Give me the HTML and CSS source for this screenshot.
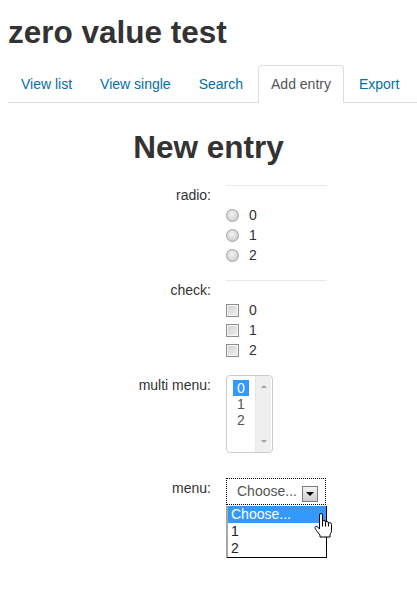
FILE: index.html
```html
<!DOCTYPE html>
<html lang="en">
<head>
  <meta charset="UTF-8" />
  <title>zero value test</title>
  <link rel="stylesheet" href="styles.css">
</head>
<body>
  <h2 class="page-title">zero value test</h2>

  <ul class="tabs">
    <li><a href="#">View list</a></li>
    <li><a href="#">View single</a></li>
    <li><a href="#">Search</a></li>
    <li class="active"><a href="#">Add entry</a></li>
    <li><a href="#">Export</a></li>
  </ul>

  <h2 class="form-title">New entry</h2>

  <form class="entry-form">
    <div class="row">
      <div class="label">radio:</div>
      <div class="field">
        <div class="sep"></div>
        <label class="opt"><input type="radio" name="radio"> 0</label>
        <label class="opt"><input type="radio" name="radio"> 1</label>
        <label class="opt"><input type="radio" name="radio"> 2</label>
      </div>
    </div>

    <div class="row">
      <div class="label">check:</div>
      <div class="field">
        <div class="sep"></div>
        <label class="opt"><input type="checkbox"> 0</label>
        <label class="opt"><input type="checkbox"> 1</label>
        <label class="opt"><input type="checkbox"> 2</label>
      </div>
    </div>

    <div class="row row-multi">
      <div class="label">multi menu:</div>
      <div class="field">
        <div class="listbox">
          <div class="listbox-opts">
            <span class="lb-opt selected">0</span>
            <span class="lb-opt">1</span>
            <span class="lb-opt">2</span>
          </div>
          <div class="scrollbar">
            <span class="sb-up"></span>
            <span class="sb-down"></span>
          </div>
        </div>
      </div>
    </div>

    <div class="row row-menu">
      <div class="label">menu:</div>
      <div class="field">
        <div class="menu-wrap">
          <div class="select">
            <span class="select-text">Choose...</span>
            <span class="select-btn"></span>
          </div>
          <ul class="popup">
            <li class="highlight">Choose...</li>
            <li>1</li>
            <li>2</li>
          </ul>
          <!-- mouse pointer over the open list -->
          <svg class="cursor" width="18" height="25" viewBox="0 0 18 25">
            <path d="M5 1.5 Q5 0 6.5 0 Q8 0 8 1.5 V8 Q8 7 9.5 7 Q11 7 11 8.5 V9 Q11 8 12.5 8 Q14 8 14 9.5 V10 Q14 9.2 15.3 9.2 Q17 9.2 17 11 V17 Q17 19 15.5 21 V23.5 H5.5 V21.5 Q4 20 2 17 L0.6 14.8 Q0 13.6 1.2 13 Q2.4 12.5 3.4 13.7 L5 15.5 Z" fill="#fff" stroke="#000" stroke-width="1" transform="translate(0.5 0.5)"/>
            <path d="M8.5 8.5 V13.5 M11.5 9.5 V13.5 M14.5 10.5 V13.5" stroke="#000" stroke-width="1" fill="none"/>
          </svg>
        </div>
      </div>
    </div>
  </form>
</body>
</html>
```

FILE: styles.css
```css
* {
  box-sizing: border-box;
}

body {
  margin: 0;
  padding: 12px 8px 0;
  min-height: 592px;
  font-family: "Liberation Sans", Arial, sans-serif;
  font-size: 14px;
  line-height: 20px;
  color: #333;
  background: #fff;
}

h2 {
  margin: 0;
  font-size: 31.5px;
  line-height: 40px;
  font-weight: bold;
  color: #333;
}

.tabs {
  list-style: none;
  margin: 13px -8px 0 0;
  padding: 0;
  display: flex;
  border-bottom: 1px solid #ddd;
}

.tabs li {
  flex-shrink: 0;
  margin-bottom: -1px;
}

.tabs a {
  display: block;
  padding: 8px 12px;
  margin-right: 2px;
  line-height: 20px;
  white-space: nowrap;
  border: 1px solid transparent;
  border-radius: 4px 4px 0 0;
  color: #0070a8;
  text-decoration: none;
}

.tabs .active a {
  color: #555;
  background: #fff;
  border-color: #ddd #ddd transparent;
}

.form-title {
  margin-top: 24px;
  text-align: center;
}

.entry-form {
  margin-top: 18px;
  padding-bottom: 70px;
}

.row {
  display: grid;
  grid-template-columns: 203px 1fr;
  column-gap: 15px;
  margin-bottom: 15px;
}

.row-multi {
  margin-bottom: 25px;
}

.label {
  text-align: right;
}

.sep {
  width: 101px;
  border-top: 1px solid #e8e8e8;
  margin-bottom: 19px;
}

.opt {
  display: flex;
  align-items: center;
  height: 20px;
  gap: 10px;
}

.opt input {
  -webkit-appearance: none;
  appearance: none;
  margin: 0;
  width: 13px;
  height: 13px;
}

.opt input[type="radio"] {
  border-radius: 50%;
  border: 1px solid #a2a2a2;
  background: radial-gradient(circle at 45% 40%, #f4f4f4 0, #dcdcdc 45%, #c4c4c4 100%);
}

.opt input[type="checkbox"] {
  border: 1px solid #8f8f8f;
  box-shadow: inset 0 0 0 1px #f4f4f4;
  background: linear-gradient(135deg, #cfcfcf, #f2f2f2);
}

/* multi select box */
.listbox {
  display: flex;
  width: 47px;
  height: 78px;
  padding: 0 1px 0 0;
  border: 1px solid #ccc;
  border-radius: 4px;
  color: #555;
}

.listbox-opts {
  width: 28px;
  padding-top: 4px;
}

.lb-opt {
  display: block;
  width: fit-content;
  margin-left: 6px;
  padding: 0 4px;
  line-height: 16px;
}

.lb-opt.selected {
  background: #3399ff;
  color: #fff;
}

.scrollbar {
  width: 16px;
  background: #efefef;
  border-left: 1px solid #e6e6e6;
  display: flex;
  flex-direction: column;
  justify-content: space-between;
  align-items: center;
  padding: 9px 0 9px;
}

.sb-up,
.sb-down {
  width: 0;
  height: 0;
  border-left: 3px solid transparent;
  border-right: 3px solid transparent;
}

.sb-up {
  border-bottom: 3px solid #a3a3a3;
}

.sb-down {
  border-top: 3px solid #a3a3a3;
}

/* single select with open list */
.menu-wrap {
  position: relative;
  width: 100px;
}

.select {
  display: flex;
  width: 100px;
  height: 27px;
  padding-left: 10px;
  border: 1px dotted #000;
  color: #555;
  line-height: 20px;
  padding-top: 2px;
}

.select-btn {
  position: relative;
  width: 16px;
  height: 16px;
  margin: 5px 7px 0 auto;
  border: 1px solid #7a7a7a;
  background: linear-gradient(#f4f4f4, #cdcdcd);
}

.select-btn::after {
  content: '';
  position: absolute;
  left: 3px;
  top: 5px;
  border-left: 4px solid transparent;
  border-right: 4px solid transparent;
  border-top: 4px solid #000;
}

.popup {
  position: absolute;
  left: 0;
  top: 28px;
  width: 101px;
  margin: 0;
  padding: 0;
  list-style: none;
  background: #fff;
  border-left: 2px solid #a6a6a6;
  border-right: 1px solid #000;
  border-bottom: 1px solid #000;
  color: #222;
  z-index: 5;
}

.popup li {
  padding-left: 3px;
  line-height: 17px;
}

.popup li.highlight {
  background: #3399ff;
  color: #fff;
}

.cursor {
  position: absolute;
  left: 88px;
  top: 35px;
  z-index: 6;
}
```
